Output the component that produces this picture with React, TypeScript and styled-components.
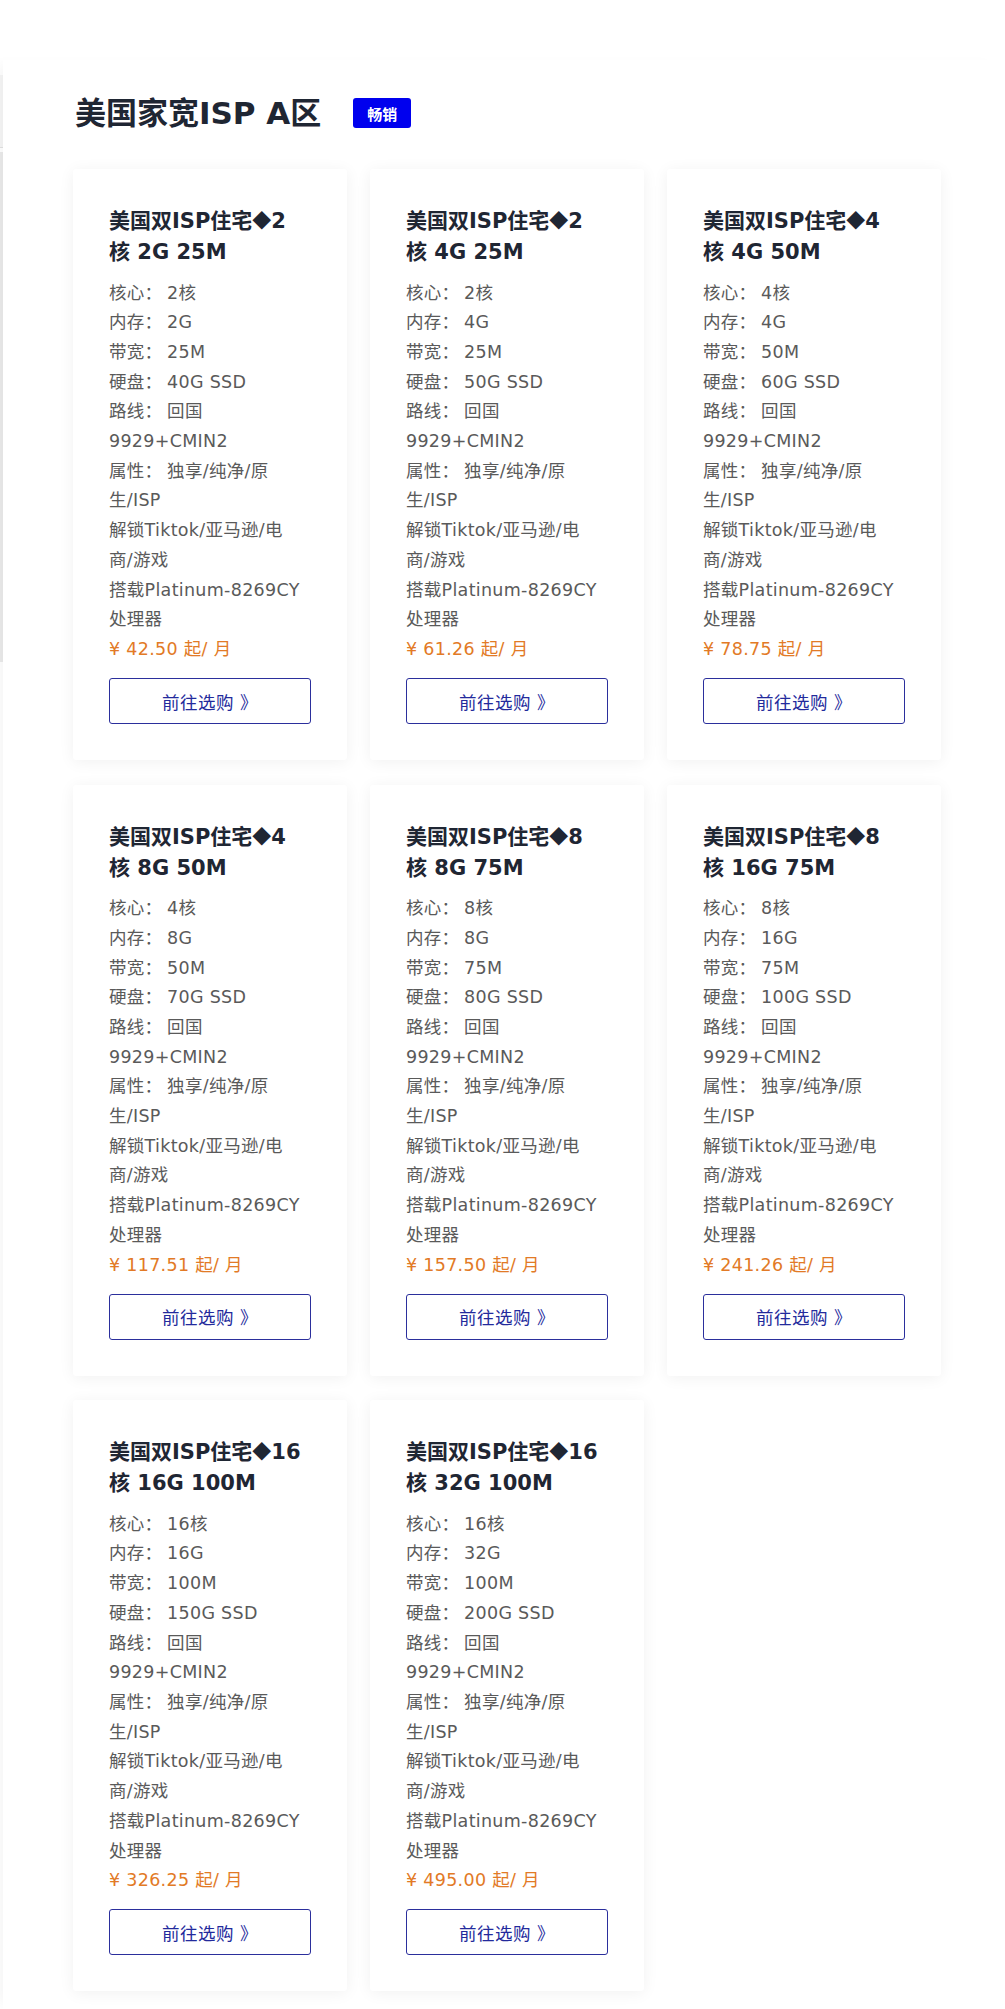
import styled, { createGlobalStyle } from 'styled-components';

const GlobalStyle = createGlobalStyle`
  body {
    margin: 0;
    background: #fff;
    font-family: "DejaVu Sans", "Noto Sans CJK SC", sans-serif;
  }
`;

interface Plan {
  cores: number;
  ram: string;
  bandwidth: string;
  disk: string;
  price: string;
}

const plans: Plan[] = [
  { cores: 2, ram: '2G', bandwidth: '25M', disk: '40G SSD', price: '42.50' },
  { cores: 2, ram: '4G', bandwidth: '25M', disk: '50G SSD', price: '61.26' },
  { cores: 4, ram: '4G', bandwidth: '50M', disk: '60G SSD', price: '78.75' },
  { cores: 4, ram: '8G', bandwidth: '50M', disk: '70G SSD', price: '117.51' },
  { cores: 8, ram: '8G', bandwidth: '75M', disk: '80G SSD', price: '157.50' },
  { cores: 8, ram: '16G', bandwidth: '75M', disk: '100G SSD', price: '241.26' },
  { cores: 16, ram: '16G', bandwidth: '100M', disk: '150G SSD', price: '326.25' },
  { cores: 16, ram: '32G', bandwidth: '100M', disk: '200G SSD', price: '495.00' },
];

// narrow gap after the full-width colon
const SEP = '：\u2005';

const PlanCard = ({ plan }: { plan: Plan }) => {
  return (
    <Card>
      <CardTitle>
        美国双ISP住宅<Diamond>◆</Diamond>{plan.cores}
        <br />
        核 {plan.ram} {plan.bandwidth}
      </CardTitle>
      <SpecList>
        <Spec>核心{SEP}{plan.cores}核</Spec>
        <Spec>内存{SEP}{plan.ram}</Spec>
        <Spec>带宽{SEP}{plan.bandwidth}</Spec>
        <Spec>硬盘{SEP}{plan.disk}</Spec>
        <Spec>路线{SEP}回国<br />9929+CMIN2</Spec>
        <Spec>属性{SEP}独享/纯净/原<br />生/ISP</Spec>
        <Spec>解锁Tiktok/亚马逊/电<br />商/游戏</Spec>
        <Spec>搭载Platinum-8269CY<br />处理器</Spec>
        <Price>¥ {plan.price} 起/ 月</Price>
      </SpecList>
      <BuyButton>前往选购 》</BuyButton>
    </Card>
  );
};

const App = () => {
  return (
    <>
      <GlobalStyle />
      <Page>
        <SideStrip>
          <StripTop />
          <StripBody />
        </SideStrip>
        <Main>
          <Header>
            <Heading>美国家宽ISP A区</Heading>
            <Badge>畅销</Badge>
          </Header>
          <CardGrid>
            {plans.map((p, i) => (
              <PlanCard key={i} plan={p} />
            ))}
          </CardGrid>
        </Main>
      </Page>
    </>
  );
};

const Page = styled.div`
  display: flex;
  align-items: flex-start;
  min-height: 2009px;
`;

const SideStrip = styled.div`
  width: 3px;
  margin-top: 75px;
  display: flex;
  flex-direction: column;
`;

const StripTop = styled.div`
  height: 72px;
  background: #f6f6f6;
  border-bottom: 1px solid #e2e2e2;
`;

const StripBody = styled.div`
  height: 510px;
  margin-top: 4px;
  background: #ebebeb;
`;

const Main = styled.div`
  flex: 1;
  margin-top: 60px;
  padding: 33px 0 18px 70px;
  background: #fff;
  box-shadow: -12px 0 14px -6px rgba(0, 0, 0, 0.04);
`;

const Header = styled.div`
  display: flex;
  align-items: center;
  gap: 32px;
  margin-bottom: 36px;
`;

const Heading = styled.h1`
  margin: 0;
  font-size: 31px;
  line-height: 40px;
  font-weight: 700;
  color: #1f2633;
  padding-left: 2px;
`;

const Badge = styled.span`
  display: inline-flex;
  align-items: center;
  justify-content: center;
  width: 58px;
  height: 30px;
  border-radius: 3px;
  background: #0000ee;
  color: #fff;
  font-size: 15px;
  font-weight: 700;
`;

const CardGrid = styled.div`
  display: grid;
  grid-template-columns: repeat(3, 274px);
  column-gap: 23px;
  row-gap: 24.5px;
`;

const Card = styled.div`
  display: flex;
  flex-direction: column;
  padding: 37px 36px 36px;
  background: #fff;
  border-radius: 3px;
  box-shadow: 0 2px 16px rgba(0, 0, 0, 0.06);
`;

const CardTitle = styled.h3`
  margin: 0 0 10.5px;
  font-size: 21px;
  line-height: 31px;
  font-weight: 700;
  color: #1f2633;
  white-space: nowrap;
`;

const Diamond = styled.span`
  font-family: "Noto Sans CJK SC", sans-serif;
  font-size: 19px;
  line-height: 1;
`;

const SpecList = styled.div`
  display: flex;
  flex-direction: column;
`;

const Spec = styled.div`
  font-size: 17.5px;
  line-height: 29.7px;
  letter-spacing: 0.3px;
  color: #5a5a5a;
  white-space: pre;
`;

const Price = styled(Spec)`
  color: #e27a26;
`;

const BuyButton = styled.button`
  margin-top: 13.5px;
  height: 46px;
  width: 100%;
  border: 1.5px solid #2b2f9c;
  border-radius: 3px;
  background: #fff;
  color: #232a9c;
  font-family: inherit;
  font-size: 17.5px;
  letter-spacing: 0.5px;
  cursor: pointer;
`;

export default App;
